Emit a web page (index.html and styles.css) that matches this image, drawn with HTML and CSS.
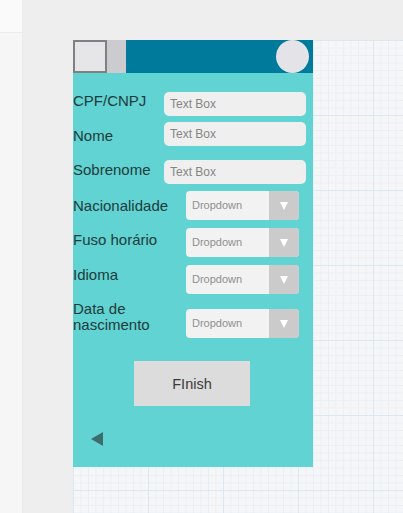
FILE: index.html
```html
<!DOCTYPE html>
<html lang="pt">
<head>
<meta charset="utf-8">
<title>Cadastro</title>
<link rel="stylesheet" href="styles.css">
</head>
<body>
<div class="app">
  <aside class="side">
    <div class="side-top"></div>
    <div class="side-rest"></div>
  </aside>
  <main class="stage">
    <div class="canvas">
      <div class="phone">
        <header class="phone-head">
          <div class="menu-box"></div>
          <div class="menu-gap"></div>
          <div class="head-bar"><span class="avatar"></span></div>
        </header>
        <form class="form">
          <div class="row row-1">
            <label class="lbl lbl-1">CPF/CNPJ</label>
            <div class="textbox">Text Box</div>
          </div>
          <div class="row row-2">
            <label class="lbl lbl-2">Nome</label>
            <div class="textbox">Text Box</div>
          </div>
          <div class="row row-3">
            <label class="lbl lbl-3">Sobrenome</label>
            <div class="textbox">Text Box</div>
          </div>
          <div class="row row-4">
            <label class="lbl lbl-4">Nacionalidade</label>
            <div class="dropdown"><span class="dd-text">Dropdown</span><span class="dd-btn"><span class="dd-arrow"></span></span></div>
          </div>
          <div class="row row-5">
            <label class="lbl lbl-5">Fuso horário</label>
            <div class="dropdown"><span class="dd-text">Dropdown</span><span class="dd-btn"><span class="dd-arrow"></span></span></div>
          </div>
          <div class="row row-6">
            <label class="lbl lbl-6">Idioma</label>
            <div class="dropdown"><span class="dd-text">Dropdown</span><span class="dd-btn"><span class="dd-arrow"></span></span></div>
          </div>
          <div class="row row-7">
            <label class="lbl lbl-7">Data de<br>nascimento</label>
            <div class="dropdown"><span class="dd-text">Dropdown</span><span class="dd-btn"><span class="dd-arrow"></span></span></div>
          </div>
          <div class="finish">FInish</div>
          <div class="back"></div>
        </form>
      </div>
    </div>
  </main>
</div>
</body>
</html>
```

FILE: styles.css
```css
* { box-sizing: border-box; margin: 0; padding: 0; }
html, body { width: 403px; height: 513px; overflow: hidden; }
body { font-family: "Liberation Sans", Arial, sans-serif; background: #eeeeee; }

.app { display: flex; height: 513px; }

.side { width: 23px; display: flex; flex-direction: column; border-right: 1px solid #ebebeb; }
.side-top { height: 33px; background: #fafafa; border-bottom: 1px solid #ececec; }
.side-rest { flex: 1; background: #f6f6f6; }

.stage { flex: 1; background: #eeeeee; padding: 40px 0 0 50px; display: flex; }
.canvas {
  flex: 1;
  background-color: #f5f6f8;
  background-image:
    linear-gradient(to right, #dce7f4 1px, transparent 1px),
    linear-gradient(to bottom, #dce7f4 1px, transparent 1px),
    linear-gradient(to right, #ebeff5 1px, transparent 1px),
    linear-gradient(to bottom, #ebeff5 1px, transparent 1px);
  background-size: 75px 75px, 75px 75px, 7.5px 7.5px, 7.5px 7.5px;
}

.phone { width: 240px; height: 427px; background: #61d3d2; display: flex; flex-direction: column; }

.phone-head { height: 33px; display: flex; }
.menu-box { width: 34px; height: 33px; background: #e6e6e9; border: 2px solid #808080; }
.menu-gap { width: 19px; background: #cbcbd0; }
.head-bar { flex: 1; background: #007a9b; display: flex; justify-content: flex-end; align-items: center; padding-right: 4px; }
.avatar { width: 33px; height: 33px; border-radius: 50%; background: #e4e4e8; }

.form { display: flex; flex-direction: column; padding-top: 19px; }

.row { display: flex; align-items: flex-start; }
.row-2 { margin-top: 6px; }
.row-3 { margin-top: 14px; }
.row-4 { margin-top: 7px; }
.row-5 { margin-top: 8px; }
.row-6 { margin-top: 8px; }
.row-7 { margin-top: 15px; }

.lbl { font-size: 15px; line-height: 17px; color: #1f3b3b; }
.row-1 .lbl, .row-2 .lbl, .row-3 .lbl { width: 91px; }
.row-4 .lbl, .row-5 .lbl, .row-6 .lbl, .row-7 .lbl { width: 113px; }
.lbl-1 { margin-top: 0; }
.lbl-2 { margin-top: 5px; }
.lbl-3 { margin-top: 1px; }
.lbl-4 { margin-top: 6px; }
.lbl-5 { margin-top: 3px; }
.lbl-6 { margin-top: 1px; }
.lbl-7 { margin-top: -8px; line-height: 16px; }

.textbox {
  width: 142px; height: 24px; border-radius: 5px; background: #efefef;
  font-size: 12px; color: #858585; padding-left: 6px; line-height: 24px;
}

.dropdown {
  width: 113px; height: 29px; border-radius: 4px; background: #f2f2f2;
  display: flex; overflow: hidden;
}
.dd-text { flex: 1; font-size: 11px; color: #8f8f8f; padding-left: 6px; line-height: 29px; }
.dd-btn { width: 30px; background: #cbcbcb; display: flex; align-items: center; justify-content: center; }
.dd-arrow { width: 0; height: 0; border-left: 4.5px solid transparent; border-right: 4.5px solid transparent; border-top: 8px solid #ffffff; }

.finish {
  margin: 23px 0 0 61px; width: 116px; height: 45px; background: #dcdcdc;
  display: flex; align-items: center; justify-content: center;
  font-size: 14.5px; color: #3a3a3a;
}

.back {
  margin: 26px 0 0 18px; width: 0; height: 0;
  border-top: 7.5px solid transparent; border-bottom: 7.5px solid transparent;
  border-right: 12px solid #3b6d6d;
}
```
